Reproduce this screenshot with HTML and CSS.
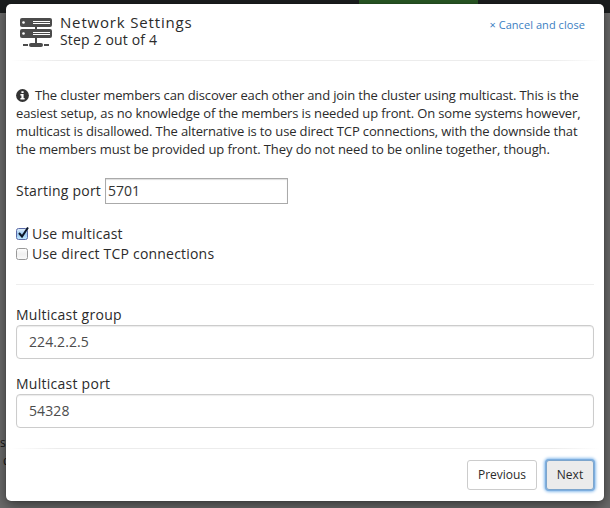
FILE: index.html
```html
<!DOCTYPE html>
<html lang="en">
<head>
<meta charset="utf-8">
<title>Network Settings</title>
<link rel="stylesheet" href="styles.css">
</head>
<body>
<div class="page">
  <div class="navbar"><div class="nav-active"></div></div>
  <div class="page-body"><span class="behind">s</span><span class="behind second">d</span></div>
</div>
<div class="modal">
  <header class="head">
    <svg class="server" viewBox="0 0 32 30" width="32" height="30">
      <g fill="#4b4b4b"><rect x="0" y="0" width="32" height="9" rx="2"/><rect x="0" y="11" width="32" height="9" rx="2"/><rect x="15" y="9" width="2" height="17"/><rect x="9" y="25" width="14" height="4" rx="2"/><rect x="3" y="26" width="5" height="2"/><rect x="24" y="26" width="5" height="2"/></g>
      <g fill="#fff"><circle cx="3.5" cy="4.5" r="1.3"/><circle cx="3.5" cy="15.5" r="1.3"/><path d="M13 3h17v1H13zM13 5h17v1H13zM13 14h17v1H13zM13 16h17v1H13z"/></g>
    </svg>
    <div class="titles"><h1>Network Settings</h1><div class="step">Step 2 out of 4</div></div>
    <a class="cancel">× Cancel and close</a>
  </header>
  <div class="rule"></div>
  <p class="info"><svg class="info-icon" viewBox="0 0 13 13" width="13" height="13"><circle cx="6.5" cy="6.5" r="6.4" fill="#333"/><path fill="#fff" d="M5.4 2.2h2.2v1.8H5.4zM4.4 5h3.2v4h1v1.5H4.4V9h1V6.4h-1z"/></svg><span class="tight">The cluster members can discover each other and join the cluster using multicast. This is the</span><br>easiest setup, as no knowledge of the members is needed up front. On some systems however,<br>multicast is disallowed. The alternative is to use direct TCP connections, with the downside that<br><span class="loose">the members must be provided up front. They do not need to be online together, though.</span></p>
  <div class="port"><label for="port">Starting port</label><input id="port" value="5701"></div>
  <div class="check"><svg class="box" viewBox="0 0 14 14" width="14" height="14"><defs><linearGradient id="blue" x2="0" y2="1"><stop stop-color="#e4f0fb"/><stop offset=".5" stop-color="#9bc8f0"/><stop offset="1" stop-color="#c2eaff"/></linearGradient></defs><rect x=".5" y="2.5" width="11" height="11" rx="2" fill="url(#blue)" stroke="#5a69a6"/><path d="M3 7l3 3.5L12 1.5" fill="none" stroke="#0b1628" stroke-width="2"/></svg><span>Use multicast</span></div>
  <div class="check"><svg class="box" viewBox="0 0 14 14" width="14" height="14"><defs><linearGradient id="grey" x2="0" y2="1"><stop stop-color="#fff"/><stop offset=".5" stop-color="#f0f0f0"/><stop offset="1" stop-color="#fafafa"/></linearGradient></defs><rect x=".5" y="2.5" width="11" height="11" rx="2" fill="url(#grey)" stroke="#999"/></svg><span>Use direct TCP connections</span></div>
  <div class="rule middle"></div>
  <div class="field"><label for="group">Multicast group</label><input id="group" value="224.2.2.5"></div>
  <div class="field"><label for="mport">Multicast port</label><input id="mport" value="54328"></div>
  <div class="rule bottom"></div>
  <footer class="actions"><button class="btn">Previous</button><button class="btn next">Next</button></footer>
</div>
</body>
</html>
```
FILE: styles.css
```css
* { box-sizing: border-box; }
body { margin: 0; width: 610px; height: 508px; overflow: hidden; font-family: "Open Sans", sans-serif; font-size: 14px; color: #2b2b2b; }
.page { height: 508px; background: #6b6b6b; }
.navbar { height: 13px; background: #1b1e1f; }
.nav-active { width: 119px; height: 13px; margin-left: 359px; background: #295824; }
.page-body { display: flex; flex-direction: column; padding-top: 421px; font-size: 12px; line-height: 18px; color: #161616; }
.second { padding-left: 3px; }
.modal { position: absolute; left: 6px; top: 4px; width: 598px; height: 497px; background: #fff; border-radius: 5px; box-shadow: 0 4px 13px rgba(0,0,0,.5), 0 0 1px rgba(0,0,0,.5); }
.head { height: 56px; display: flex; padding: 0 19px 0 14px; }
.server { margin-top: 14px; }
.titles { margin: 9px 0 0 8px; flex: 1; }
h1 { margin: 0; font-size: 15px; line-height: 19px; font-weight: 400; letter-spacing: .83px; }
.step { line-height: 16px; letter-spacing: .15px; }
.cancel { margin-top: 12px; font-size: 11px; line-height: 18px; letter-spacing: .06px; color: #3b7ec2; }
.rule { height: 1px; margin: 0 4px; background: linear-gradient(90deg, #fff, #ececec 8%, #ececec 92%, #fff); }
.info { margin: 25px 0 0 10px; font-size: 13px; line-height: 18px; letter-spacing: -.13px; white-space: nowrap; }
.tight { letter-spacing: -.15px; }
.loose { letter-spacing: -.09px; }
.info-icon { vertical-align: -2px; margin-right: 6px; }
.port { display: flex; align-items: center; margin: 20px 0 0 10px; height: 26px; }
.port label { width: 85px; padding-bottom: 2px; letter-spacing: .22px; white-space: nowrap; }
.port input { width: 183px; height: 26px; margin-left: 4px; padding: 0 2px 2px; border: 1px solid #aaa; box-shadow: inset 0 1px 1px #ddd; font: inherit; color: #333; }
.check { display: flex; align-items: center; height: 20px; margin-left: 10px; letter-spacing: .2px; }
.check span { padding-bottom: 2px; }
.port + .check { margin-top: 20px; }
.box { margin: -3px 2px 0 0; }
.middle { margin: 20px 10px 0; background: #eee; }
.field { margin: 20px 10px 0; height: 54px; }
.field + .field { margin-top: 15px; }
.field label { display: block; line-height: 20px; letter-spacing: .26px; }
.field input { display: block; width: 578px; height: 34px; padding: 0 12px 2px; border: 1px solid #ccc; border-radius: 4px; box-shadow: inset 0 1px 1px rgba(0,0,0,.08); font: inherit; letter-spacing: .1px; color: #4c4c4c; }
.bottom { margin-top: 20px; }
.actions { display: flex; justify-content: flex-end; gap: 9px; padding: 11px 10px 0; }
.btn { width: 70px; height: 30px; padding: 0 0 2px; border: 1px solid #ccc; border-radius: 3px; background: #fff; font: 12px "Open Sans", sans-serif; color: #2b2b2b; }
.next { width: 48px; background: #ebebeb; border-color: #7da5cc; box-shadow: 0 0 0 1px #7daedf, 0 0 3px 2px #8cbdec; }
```
